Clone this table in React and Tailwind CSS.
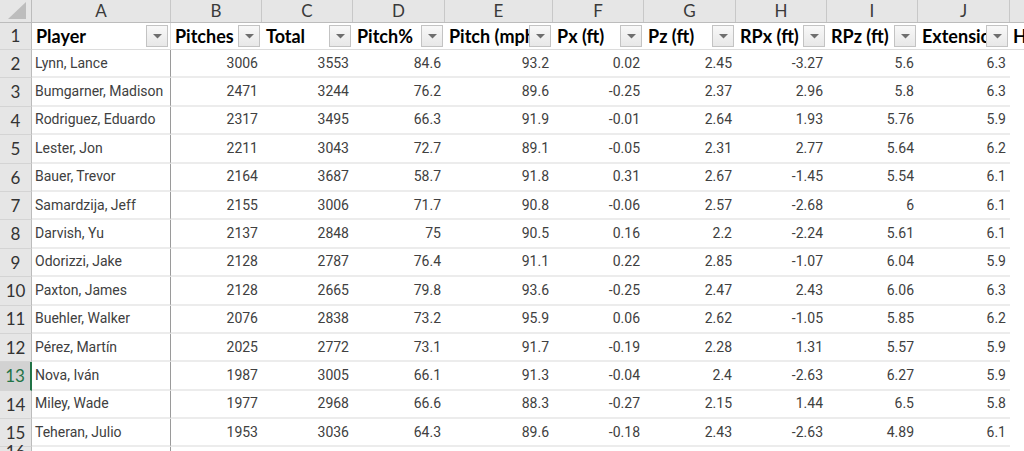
const COLS = [
  { letter: 'A', w: 'w-[139px] border-r border-[#9a9a9a]', title: 'Player' },
  { letter: 'B', w: 'w-[91px]', title: 'Pitches' },
  { letter: 'C', w: 'w-[91px]', title: 'Total' },
  { letter: 'D', w: 'w-[92px]', title: 'Pitch%' },
  { letter: 'E', w: 'w-[108px]', title: 'Pitch (mph)' },
  { letter: 'F', w: 'w-[91px]', title: 'Px (ft)' },
  { letter: 'G', w: 'w-[92px]', title: 'Pz (ft)' },
  { letter: 'H', w: 'w-[91px]', title: 'RPx (ft)' },
  { letter: 'I', w: 'w-[91px]', title: 'RPz (ft)' },
  { letter: 'J', w: 'w-[92px]', title: 'Extension (ft)' },
]

const ROWS = [
  ['Lynn, Lance', 3006, 3553, 84.6, 93.2, 0.02, 2.45, -3.27, 5.6, 6.3],
  ['Bumgarner, Madison', 2471, 3244, 76.2, 89.6, -0.25, 2.37, 2.96, 5.8, 6.3],
  ['Rodriguez, Eduardo', 2317, 3495, 66.3, 91.9, -0.01, 2.64, 1.93, 5.76, 5.9],
  ['Lester, Jon', 2211, 3043, 72.7, 89.1, -0.05, 2.31, 2.77, 5.64, 6.2],
  ['Bauer, Trevor', 2164, 3687, 58.7, 91.8, 0.31, 2.67, -1.45, 5.54, 6.1],
  ['Samardzija, Jeff', 2155, 3006, 71.7, 90.8, -0.06, 2.57, -2.68, 6, 6.1],
  ['Darvish, Yu', 2137, 2848, 75, 90.5, 0.16, 2.2, -2.24, 5.61, 6.1],
  ['Odorizzi, Jake', 2128, 2787, 76.4, 91.1, 0.22, 2.85, -1.07, 6.04, 5.9],
  ['Paxton, James', 2128, 2665, 79.8, 93.6, -0.25, 2.47, 2.43, 6.06, 6.3],
  ['Buehler, Walker', 2076, 2838, 73.2, 95.9, 0.06, 2.62, -1.05, 5.85, 6.2],
  ['Pérez, Martín', 2025, 2772, 73.1, 91.7, -0.19, 2.28, 1.31, 5.57, 5.9],
  ['Nova, Iván', 1987, 3005, 66.1, 91.3, -0.04, 2.4, -2.63, 6.27, 5.9],
  ['Miley, Wade', 1977, 2968, 66.6, 88.3, -0.27, 2.15, 1.44, 6.5, 5.8],
  ['Teheran, Julio', 1953, 3036, 64.3, 89.6, -0.18, 2.43, -2.63, 4.89, 6.1],
]

const ACTIVE_ROW = 13

function FilterButton() {
  return (
    <span className="shrink-0 mr-[2px] w-[22px] h-[22px] border border-[#c3c3c3] bg-linear-to-b from-[#f8f8f8] to-[#e8e8e8] flex items-center justify-center">
      <svg width="9" height="5" viewBox="0 0 9 5">
        <path d="M0 0h9L4.5 4.5z" fill="#6e6e6e" />
      </svg>
    </span>
  )
}

function RowNum({ n, h }) {
  const active = n === ACTIVE_ROW
  return (
    <div
      className={`w-[32px] shrink-0 ${h} flex items-center justify-center border-b border-[#d4d4d4] font-['Lato',sans-serif] text-[17px] ${
        active
          ? 'bg-[#d2d2d2] text-[#217346] border-r-2 border-r-[#217346]'
          : 'bg-[#e6e6e6] text-[#333] border-r border-r-[#bcbcbc]'
      }`}
    >
      {n}
    </div>
  )
}

export default function App() {
  return (
    <div className="w-[1024px] h-[451px] overflow-hidden bg-white flex flex-col">
      {/* column letters */}
      <div className="flex h-[23px] shrink-0 bg-[#e6e6e6] border-b border-[#bcbcbc]">
        <div className="w-[32px] shrink-0 border-r border-[#bcbcbc] flex items-end justify-end pr-[5px] pb-[3px]">
          <svg width="18" height="17" viewBox="0 0 18 17">
            <path d="M18 0V17H0z" fill="#bdbdbd" />
          </svg>
        </div>
        {COLS.map((c) => (
          <div
            key={c.letter}
            className={`${c.w} shrink-0 border-r border-[#c8c8c8] flex items-center justify-center font-['Lato',sans-serif] text-[17px] text-[#3a3a3a]`}
          >
            {c.letter}
          </div>
        ))}
        <div className="flex-1" />
      </div>

      {/* header row */}
      <div className="flex h-[27px] shrink-0">
        <RowNum n={1} h="h-[27px]" />
        {COLS.map((c) => (
          <div
            key={c.letter}
            className={`${c.w} shrink-0 flex items-center border-b border-[#dcdcdc] font-['Lato',sans-serif] font-bold text-[18px] text-black`}
          >
            <span className="flex-1 min-w-0 overflow-hidden whitespace-nowrap pl-[4px]">{c.title}</span>
            <FilterButton />
          </div>
        ))}
        <div className="flex-1 min-w-0 overflow-hidden whitespace-nowrap pl-[3px] flex items-center border-b border-[#dcdcdc] font-['Lato',sans-serif] font-bold text-[18px] text-black">
          H
        </div>
      </div>

      {/* data rows */}
      {ROWS.map((r, i) => (
        <div key={i} className="flex h-[28.4px] shrink-0">
          <RowNum n={i + 2} h="h-[28.4px]" />
          {COLS.map((c, j) => (
            <div
              key={c.letter}
              className={`${c.w} shrink-0 overflow-hidden whitespace-nowrap flex items-center border-b-2 border-b-[#ececec] font-['Roboto',sans-serif] text-[14px] text-[#404040] ${
                j === 0 ? 'pl-[3px] justify-start' : 'pr-[4px] justify-end'
              }`}
            >
              {r[j]}
            </div>
          ))}
          <div className="flex-1" />
        </div>
      ))}

      <div className="flex h-[10px] shrink-0">
        <RowNum n={16} h="h-[10px]" />
        <div className="w-[139px] border-r border-[#9a9a9a]" />
      </div>
    </div>
  )
}
